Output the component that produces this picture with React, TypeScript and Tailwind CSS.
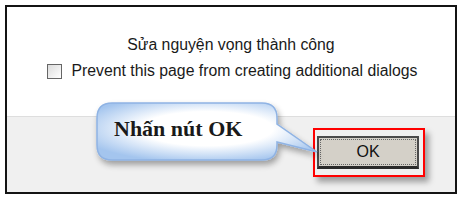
import React from "react";

export default function App() {
  return (
    <div className="relative w-[463px] h-[200px] bg-white overflow-hidden" style={{ fontFamily: '"Liberation Sans", Arial, sans-serif' }}>
      <div className="absolute left-[5px] top-[5px] w-[452px] h-[189px] border-2 border-[#141414] flex flex-col">
        <div className="h-[109px] bg-white flex flex-col items-center pt-[29px]">
          <div className="text-[15.8px] leading-[18px] text-[#1a1a1a]">Sửa nguyện vọng thành công</div>
          <div className="flex items-center mt-[8px] pl-[2px] text-[15.8px] leading-[18px] text-[#1a1a1a]">
            <span className="w-[15px] h-[15px] border border-[#666] bg-gradient-to-br from-[#dcdcdc] to-white mr-[10px]" />
            <span>Prevent this page from creating additional dialogs</span>
          </div>
        </div>
        <div className="flex-1 bg-[#f0f0f0] border-t border-[#dedede] flex justify-end items-start pt-[11px] pr-[30px]">
          <div className="border-2 border-[#ff0000] pl-[2px] pr-[4px] py-[6px] shadow-[4px_5px_6px_rgba(0,0,0,0.35)]">
            <div className="w-[102px] h-[33px] bg-[#d4d0c8] border-2 border-[#4a4a4a] border-b-[3px] border-b-[#2a2a2a] p-[1px]">
              <div className="w-full h-full border border-dotted border-[#666] flex items-center justify-center text-[16px] text-[#111]">OK</div>
            </div>
          </div>
        </div>
      </div>
      <svg className="absolute left-0 top-0" width="463" height="200" viewBox="0 0 463 200">
        <defs>
          <radialGradient id="bg" cx="0.5" cy="0.45" r="0.6">
            <stop offset="0.5" stopColor="#ffffff" />
            <stop offset="1" stopColor="#a4c5ee" />
          </radialGradient>
          <filter id="sh" x="-20%" y="-20%" width="140%" height="160%">
            <feGaussianBlur in="SourceAlpha" stdDeviation="3" />
            <feOffset dx="2" dy="4" result="b" />
            <feComponentTransfer><feFuncA type="linear" slope="0.35" /></feComponentTransfer>
            <feMerge><feMergeNode /><feMergeNode in="SourceGraphic" /></feMerge>
          </filter>
        </defs>
        <path
          d="M112 103 H262 Q277 103 277 118 V124 L317 152 L277 142 V145 Q277 160 262 160 H112 Q97 160 97 145 V118 Q97 103 112 103 Z"
          fill="url(#bg)"
          stroke="#8fb3e4"
          strokeWidth="1.5"
          filter="url(#sh)"
        />
      </svg>
      <div className="absolute left-[114px] top-[117px] text-[22px] leading-[24px] font-bold text-[#1a1a1a]" style={{ fontFamily: '"Liberation Serif", "Times New Roman", serif' }}>
        Nhấn nút OK
      </div>
    </div>
  );
}
